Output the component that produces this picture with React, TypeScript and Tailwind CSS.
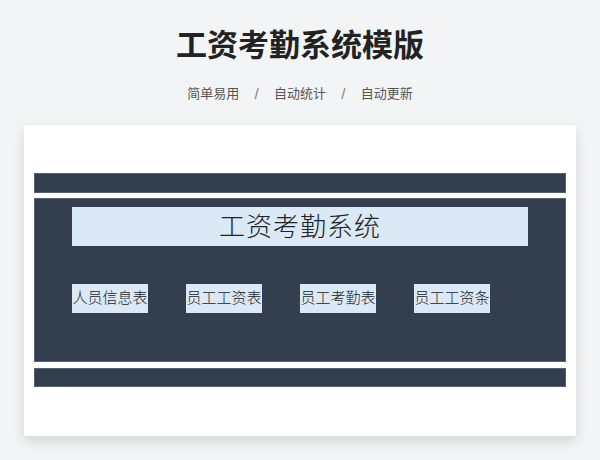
const sans = "font-['Inter','Noto_Sans_CJK_SC',sans-serif]";

const sheets = ["人员信息表", "员工工资表", "员工考勤表", "员工工资条"];

export default function App() {
  return (
    <div className={`w-[600px] h-[460px] bg-[#f3f4f6] overflow-hidden ${sans}`}>
      <div className="pt-[25px] flex flex-col items-center">
        <h1 className="text-[31px] leading-[40px] font-bold text-[#222] tracking-[0px]">
          工资考勤系统模版
        </h1>
        <div className="mt-[18px] flex items-center text-[13px] leading-[20px] text-[#555]">
          <span>简单易用</span>
          <span className="mx-[15px] text-[#777]">/</span>
          <span>自动统计</span>
          <span className="mx-[15px] text-[#777]">/</span>
          <span>自动更新</span>
        </div>
      </div>

      <div className="mx-[24px] mt-[22px] h-[311px] bg-white shadow-[0_5px_12px_rgba(0,0,0,0.13)] px-[10px] pt-[48px]">
        <div className="h-[20px] bg-[#333f4f] border border-[#56606e]" />
        <div className="mt-[5px] h-[164px] bg-[#333f4f] border border-[#56606e] px-[37px] pt-[8px]">
          <div className="h-[39px] bg-[#dbe8f5] flex items-center justify-center text-[26px] text-[#222] font-light tracking-[1px]">
            工资考勤系统
          </div>
          <div className="mt-[38px] flex gap-[38px]">
            {sheets.map((s) => (
              <div
                key={s}
                className="w-[76px] h-[29px] bg-[#dbe8f5] flex items-center justify-center text-[15px] text-[#222] font-light whitespace-nowrap"
              >
                {s}
              </div>
            ))}
          </div>
        </div>
        <div className="mt-[6px] h-[19px] bg-[#333f4f] border border-[#56606e]" />
      </div>
    </div>
  );
}
